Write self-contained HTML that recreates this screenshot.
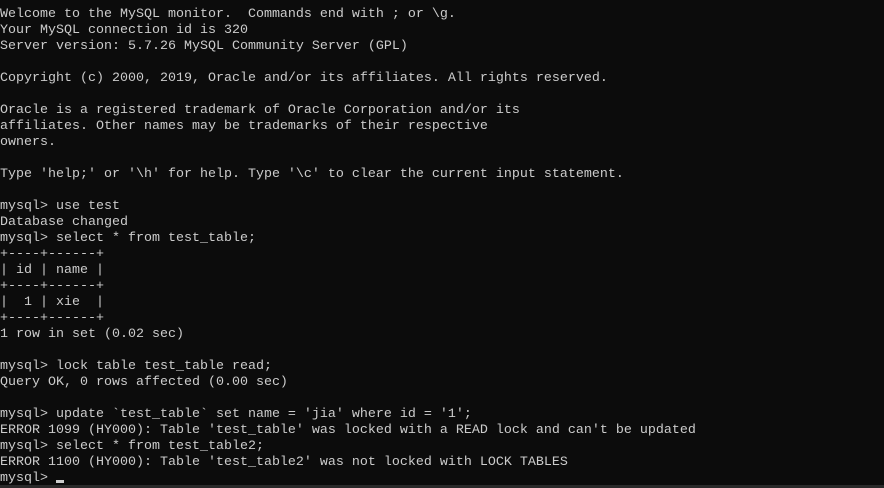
<!DOCTYPE html>
<html><head><meta charset="utf-8"><style>
html,body{margin:0;padding:0;background:#0c0c0c;width:884px;height:488px;overflow:hidden}
pre{margin:0;padding:7px 0 0 0;font-family:"Liberation Mono","Noto Sans CJK SC",monospace;font-size:13.33px;line-height:16px;color:#cccccc;letter-spacing:0;white-space:pre}
.cur{display:inline-block;width:8px;height:3px;background:#ccc;vertical-align:-2px}
.bar{position:absolute;left:0;top:485px;width:884px;height:3px;background:#2a2a2a}
</style></head><body>
<pre>Welcome to the MySQL monitor.  Commands end with ; or \g.
Your MySQL connection id is 320
Server version: 5.7.26 MySQL Community Server (GPL)

Copyright (c) 2000, 2019, Oracle and/or its affiliates. All rights reserved.

Oracle is a registered trademark of Oracle Corporation and/or its
affiliates. Other names may be trademarks of their respective
owners.

Type 'help;' or '\h' for help. Type '\c' to clear the current input statement.

mysql&gt; use test
Database changed
mysql&gt; select * from test_table;
+----+------+
| id | name |
+----+------+
|  1 | xie  |
+----+------+
1 row in set (0.02 sec)

mysql&gt; lock table test_table read;
Query OK, 0 rows affected (0.00 sec)

mysql&gt; update `test_table` set name = 'jia' where id = '1';
ERROR 1099 (HY000): Table 'test_table' was locked with a READ lock and can't be updated
mysql&gt; select * from test_table2;
ERROR 1100 (HY000): Table 'test_table2' was not locked with LOCK TABLES
mysql&gt; <span class="cur"></span></pre>
<div class="bar"></div>
</body></html>
